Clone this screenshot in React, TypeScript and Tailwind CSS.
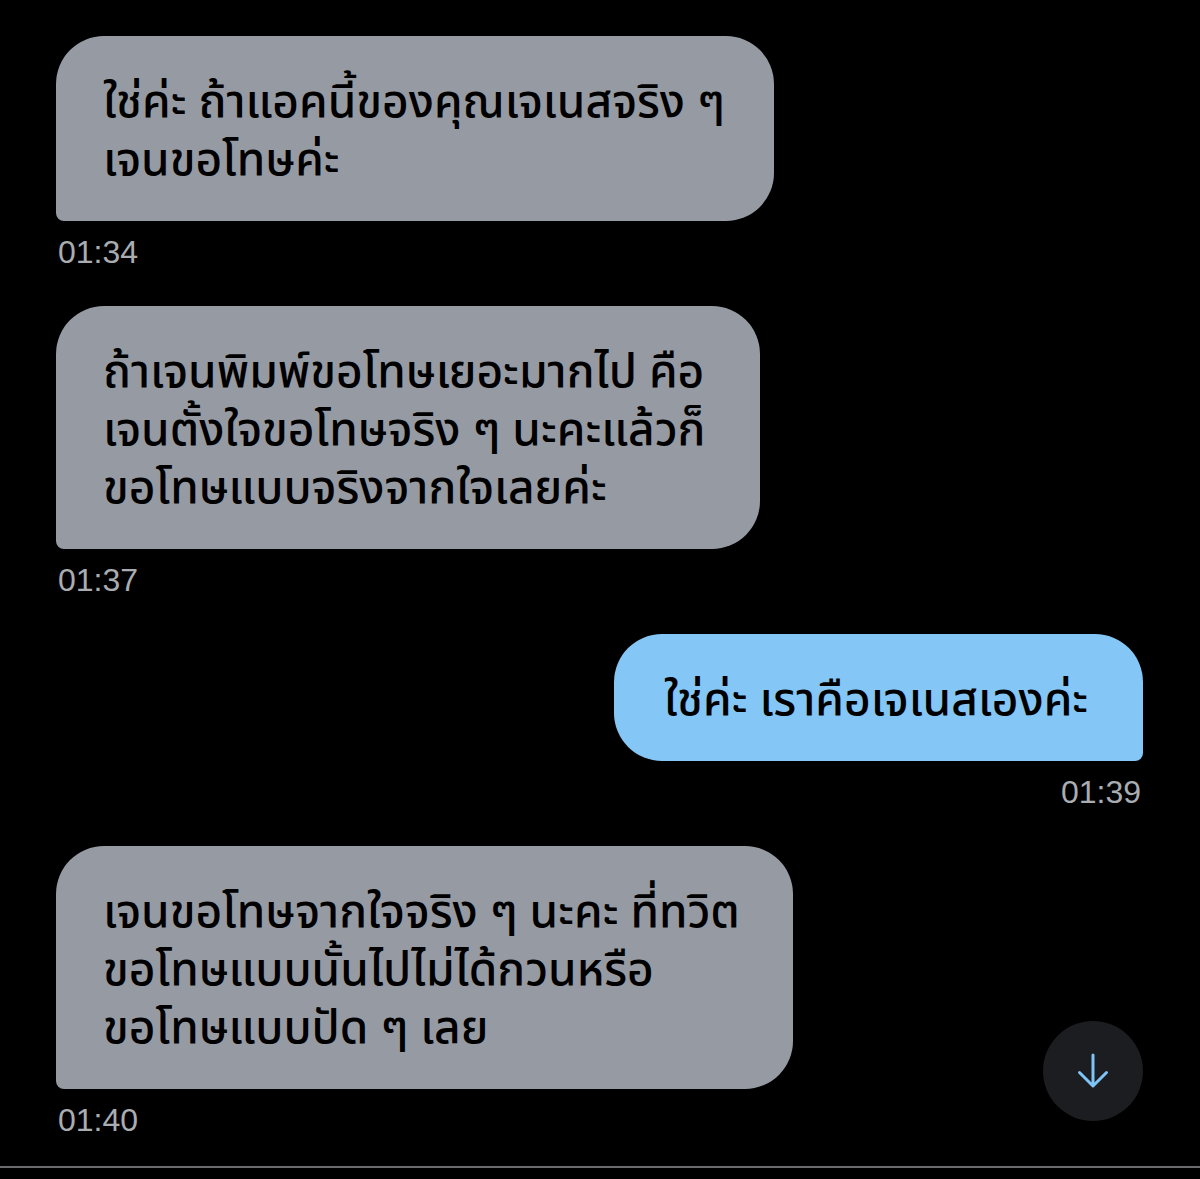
type Msg = {
  lines: string[];
  time: string;
  mine?: boolean;
  width: string;
};

const messages: Msg[] = [
  {
    lines: ["ใช่ค่ะ ถ้าแอคนี้ของคุณเจเนสจริง ๆ", "เจนขอโทษค่ะ"],
    time: "01:34",
    width: "w-[718px]",
  },
  {
    lines: [
      "ถ้าเจนพิมพ์ขอโทษเยอะมากไป คือ",
      "เจนตั้งใจขอโทษจริง ๆ นะคะแล้วก็",
      "ขอโทษแบบจริงจากใจเลยค่ะ",
    ],
    time: "01:37",
    width: "w-[704px]",
  },
  {
    lines: ["ใช่ค่ะ เราคือเจเนสเองค่ะ"],
    time: "01:39",
    mine: true,
    width: "w-[529px]",
  },
  {
    lines: [
      "เจนขอโทษจากใจจริง ๆ นะคะ ที่ทวิต",
      "ขอโทษแบบนั้นไปไม่ได้กวนหรือ",
      "ขอโทษแบบปัด ๆ เลย",
    ],
    time: "01:40",
    width: "w-[737px]",
  },
];

const Bubble = ({ msg }: { msg: Msg }) => {
  return (
    <div className={`flex flex-col ${msg.mine ? "items-end" : "items-start"}`}>
      <div
        className={`${msg.width} pt-[38px] pb-[31px] text-[46px] leading-[58px] font-medium text-black ${
          msg.mine
            ? "bg-[#84c6f5] rounded-[48px] rounded-br-[8px] pl-[50px]"
            : "bg-[#969ba3] rounded-[48px] rounded-bl-[8px] pl-[47px]"
        }`}
        style={{ fontFamily: '"Noto Sans Thai", "Noto Sans", "DejaVu Sans", sans-serif' }}
      >
        {msg.lines.map((line, i) => (
          <div key={i} className="whitespace-nowrap">
            {line}
          </div>
        ))}
      </div>
      <div
        className={`mt-[12px] mb-[35px] text-[32px] leading-[38px] text-[#a9adb2] ${
          msg.mine ? "mr-[2px]" : "ml-[2px]"
        }`}
        style={{ fontFamily: '"Liberation Sans", Arial, sans-serif' }}
      >
        {msg.time}
      </div>
    </div>
  );
};

// scroll-to-bottom arrow
const DownArrow = () => (
  <svg width="40" height="40" viewBox="0 0 40 40" fill="none">
    <path
      d="M20 4 V35 M6.5 21.5 L20 35 L33.5 21.5"
      stroke="#7ec4f4"
      strokeWidth="3"
      strokeLinecap="round"
      strokeLinejoin="round"
    />
  </svg>
);

const App = () => {
  return (
    <div className="relative w-[1200px] h-[1179px] bg-black overflow-hidden">
      <div className="flex flex-col pt-[36px] pl-[56px] pr-[57px]">
        {messages.map((m, i) => (
          <Bubble key={i} msg={m} />
        ))}
      </div>
      <div className="absolute left-0 right-0 top-[1166px] h-[2px] bg-[#6b6b6e]" />
      <button className="absolute left-[1043px] top-[1021px] w-[100px] h-[100px] rounded-full bg-[#1c1d20] flex items-center justify-center">
        <DownArrow />
      </button>
    </div>
  );
};

export default App;
